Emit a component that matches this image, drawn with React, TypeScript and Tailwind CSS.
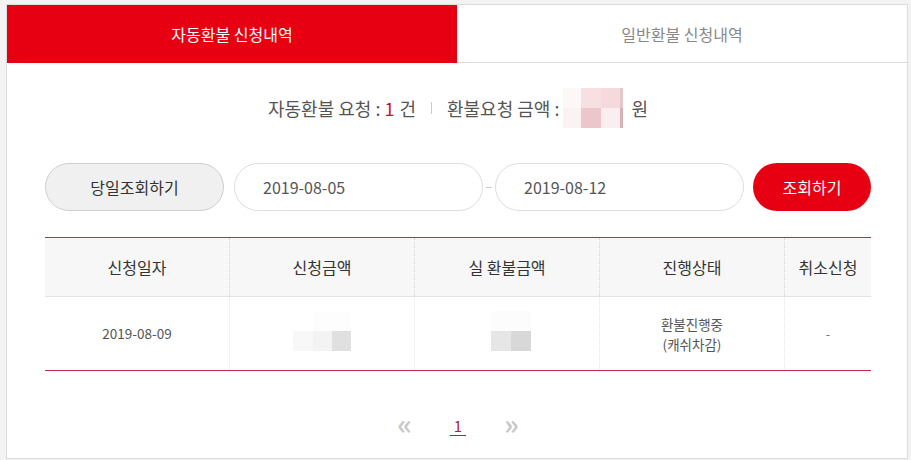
import React from 'react';

const font = { fontFamily: '"Noto Sans CJK KR", "Noto Sans", sans-serif' };

// blurred amount placeholders (mosaic)
function Mosaic({ cells, cols, rows }: { cells: string[]; cols: string; rows: string }) {
    return (
        <div className="grid" style={{ gridTemplateColumns: cols, gridTemplateRows: rows }}>
            {cells.map((c, i) => (
                <div key={i} style={{ background: c }} />
            ))}
        </div>
    );
}

export default function App() {
    const headers = ['신청일자', '신청금액', '실 환불금액', '진행상태', '취소신청'];

    return (
        <div className="w-[911px] h-[460px] bg-[#f3f3f3] pt-[4px] pl-[6px] overflow-hidden" style={font}>
            <div className="w-[902px] h-[455px] bg-white border border-[#dcdcdc] flex flex-col">
                {/* tabs */}
                <div className="flex h-[58px]">
                    <div className="flex-1 bg-[#e60012] text-white text-[16px] flex items-center justify-center">
                        자동환불 신청내역
                    </div>
                    <div className="flex-1 border-b border-[#dcdcdc] text-[#888] text-[16px] flex items-center justify-center">
                        일반환불 신청내역
                    </div>
                </div>

                <div className="pl-[38px] pr-[36px] flex flex-col">
                    {/* summary */}
                    <div className="mt-[25px] h-[40px] flex items-center justify-center text-[18px] text-[#555]">
                        <span>자동환불 요청 :</span>
                        <span className="text-[#c8102e] ml-[4px]">1</span>
                        <span className="ml-[5px]">건</span>
                        <span className="mx-[15px] w-px h-[12px] bg-[#ccc]" />
                        <span>환불요청 금액 :</span>
                        <div className="ml-[4px]">
                            <Mosaic
                                cols="18px 20px 19px 3px"
                                rows="20px 20px"
                                cells={['#fdf8f8', '#f8dfe2', '#f6d9dd', '#e3c9cc', '#fbf3f3', '#ecc6cb', '#fbeef0', '#d6b3b7']}
                            />
                        </div>
                        <span className="ml-[8px]">원</span>
                    </div>

                    {/* filters */}
                    <div className="mt-[35px] flex items-center h-[48px]">
                        <button className="w-[179px] h-[48px] rounded-full bg-[#f0f0f0] border border-[#cfcfcf] text-[16px] text-[#333]">
                            당일조회하기
                        </button>
                        <div className="ml-[10px] w-[249px] h-[48px] rounded-full border border-[#dedede] flex items-center pl-[28px] text-[16px] text-[#555]">
                            2019-08-05
                        </div>
                        <div className="w-[12px] flex justify-center">
                            <span className="w-[6px] h-px bg-[#ccc]" />
                        </div>
                        <div className="w-[249px] h-[48px] rounded-full border border-[#dedede] flex items-center pl-[28px] text-[16px] text-[#555]">
                            2019-08-12
                        </div>
                        <button className="ml-[9px] w-[118px] h-[48px] rounded-full bg-[#e60012] text-white text-[16px]">
                            조회하기
                        </button>
                    </div>

                    {/* table */}
                    <div className="mt-[26px] border-t border-b border-[#c52a4a]">
                        <div className="grid grid-cols-[185px_185px_185px_185px_86px] h-[59px] bg-[#f7f7f7] border-b border-[#e3e3e3]">
                            {headers.map((h, i) => (
                                <div
                                    key={h}
                                    className={
                                        'flex items-center justify-center text-[16px] text-[#333] ' +
                                        (i < 4 ? 'border-r border-dotted border-[#d6d6d6]' : '')
                                    }
                                >
                                    {h}
                                </div>
                            ))}
                        </div>
                        <div className="grid grid-cols-[185px_185px_185px_185px_86px] h-[73px]">
                            <div className="flex items-center justify-center text-[13.5px] text-[#555] border-r border-dotted border-[#e6e6e6]">
                                2019-08-09
                            </div>
                            <div className="flex items-center justify-center border-r border-dotted border-[#e6e6e6]">
                                <div className="mt-[-6px]">
                                    <Mosaic
                                        cols="20px 19px 19px"
                                        rows="20px 20px"
                                        cells={['#ffffff', '#fdfdfd', '#fdfdfd', '#f8f8f8', '#f3f3f3', '#e0e0e0']}
                                    />
                                </div>
                            </div>
                            <div className="flex items-center justify-center border-r border-dotted border-[#e6e6e6]">
                                <div className="mt-[-6px] ml-[8px]">
                                    <Mosaic cols="20px 20px" rows="20px 20px" cells={['#fcfcfc', '#fcfcfc', '#e6e6e6', '#d8d8d8']} />
                                </div>
                            </div>
                            <div className="flex flex-col items-center justify-center text-[13.5px] text-[#555] leading-[20px] border-r border-dotted border-[#e6e6e6]">
                                <span>환불진행중</span>
                                <span>(캐쉬차감)</span>
                            </div>
                            <div className="flex items-center justify-center text-[13px] text-[#777]">-</div>
                        </div>
                    </div>

                    {/* pagination */}
                    <div className="mt-[38px] flex items-center justify-center gap-[38px]">
                        <span className="text-[28px] font-bold leading-none text-[#c8c8c8] pb-[6px]">«</span>
                        <span className="text-[15px] leading-[18px] text-[#b5213a] border-b border-[#b5213a] w-[16px] text-center">1</span>
                        <span className="text-[28px] font-bold leading-none text-[#c8c8c8] pb-[6px]">»</span>
                    </div>
                </div>
            </div>
        </div>
    );
}
